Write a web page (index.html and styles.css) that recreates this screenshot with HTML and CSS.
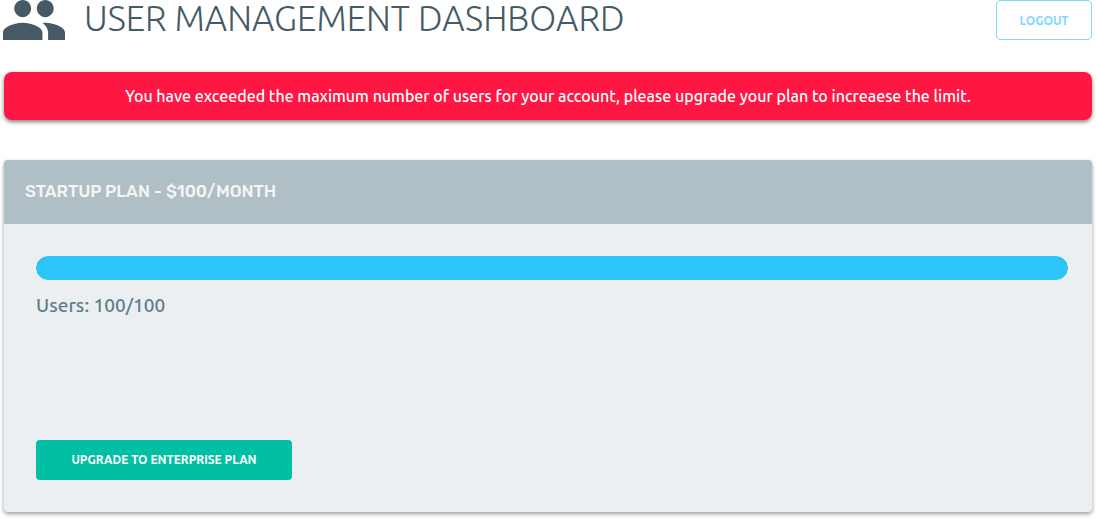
FILE: index.html
```
<!DOCTYPE html>
<html lang="en">
<head>
<meta charset="utf-8">
<meta name="viewport" content="width=device-width, initial-scale=1">
<title>User Management Dashboard</title>
<link rel="stylesheet" href="styles.css">
</head>
<body>
<header class="topbar">
  <svg class="logo" viewBox="1 5 22 14" preserveAspectRatio="none" aria-hidden="true"><path fill="currentColor" d="M16 11c1.66 0 2.99-1.34 2.99-3S17.66 5 16 5s-3 1.34-3 3 1.34 3 3 3zm-8 0c1.66 0 2.99-1.34 2.99-3S9.66 5 8 5 5 6.340 5 8s1.340 3 3 3zm0 2c-2.330 0-7 1.170-7 3.500V19h14v-2.500c0-2.330-4.670-3.500-7-3.500zm8 0c-.290 0-.620.020-.970.050 1.160.840 1.970 1.970 1.970 3.450V19h6v-2.500c0-2.330-4.670-3.500-7-3.500z"/></svg>
  <h1 class="title">USER MANAGEMENT DASHBOARD</h1>
  <button class="button button-outline" type="button">LOGOUT</button>
</header>
<main class="content">
  <div class="alert" role="alert">You have exceeded the maximum number of users for your account, please upgrade your plan to increaese the limit.</div>
  <section class="card">
    <h2 class="card-header">STARTUP PLAN - $100/MONTH</h2>
    <div class="card-body">
      <div class="meter" role="progressbar" aria-labelledby="usage" aria-valuemin="0" aria-valuemax="100" aria-valuenow="100"><div class="meter-fill" style="width: 100%"></div></div>
      <p class="usage" id="usage">Users: 100/100</p>
      <button class="button button-primary" type="button">UPGRADE TO ENTERPRISE PLAN</button>
    </div>
  </section>
</main>
</body>
</html>
```
FILE: styles.css
```
* { box-sizing: border-box; }
body {
  margin: 0;
  padding: 0 4px 8px;
  background: #fff;
  font-family: Ubuntu, "Noto Sans", sans-serif;
}
.topbar {
  display: flex;
  align-items: flex-start;
  height: 40px;
}
.logo {
  flex: none;
  width: 62px;
  height: 40px;
  margin-left: -1px;
  color: #455a64;
}
.title {
  flex: 1;
  margin: 0 0 0 19px;
  font-size: 35px;
  line-height: 36px;
  font-weight: 300;
  color: #455a64;
}
.button {
  height: 40px;
  padding: 0 0 2px;
  border: 0;
  border-radius: 4px;
  font-family: inherit;
  font-size: 12px;
  cursor: pointer;
}
.button-outline {
  width: 96px;
  padding: 0;
  border: 1px solid #80d8ff;
  background: transparent;
  color: #80d8ff;
  font-weight: 600;
}
.button-primary {
  width: 256px;
  background: #00bfa5;
  color: #fff;
  font-weight: 700;
}
.alert {
  margin: 32px 0 40px;
  padding: 12px;
  border-radius: 8px;
  background: #ff1744;
  box-shadow: 0 2px 4px rgba(0, 0, 0, 0.5);
  color: #fff;
  font-size: 16px;
  line-height: 24px;
  font-weight: 500;
  text-align: center;
}
.card {
  overflow: hidden;
  border-radius: 4px;
  background: #eceff1;
  box-shadow: 0 2px 4px rgba(0, 0, 0, 0.4);
}
.card-header {
  margin: 0;
  padding: 19px 21px 21px;
  background: #b0bec5;
  color: #f5f5f5;
  font-family: Rubik, Inter, sans-serif;
  font-size: 17px;
  line-height: 24px;
  font-weight: 500;
}
.card-body {
  padding: 32px 24px 32px 32px;
}
.meter {
  height: 24px;
  overflow: hidden;
  border-radius: 12px;
}
.meter-fill {
  height: 100%;
  border-radius: 12px;
  background: #2dc4fa;
}
.usage {
  min-height: 148px;
  margin: 12px 0 0;
  color: #607d8b;
  font-size: 19px;
  line-height: 26px;
  font-weight: 500;
}
```
